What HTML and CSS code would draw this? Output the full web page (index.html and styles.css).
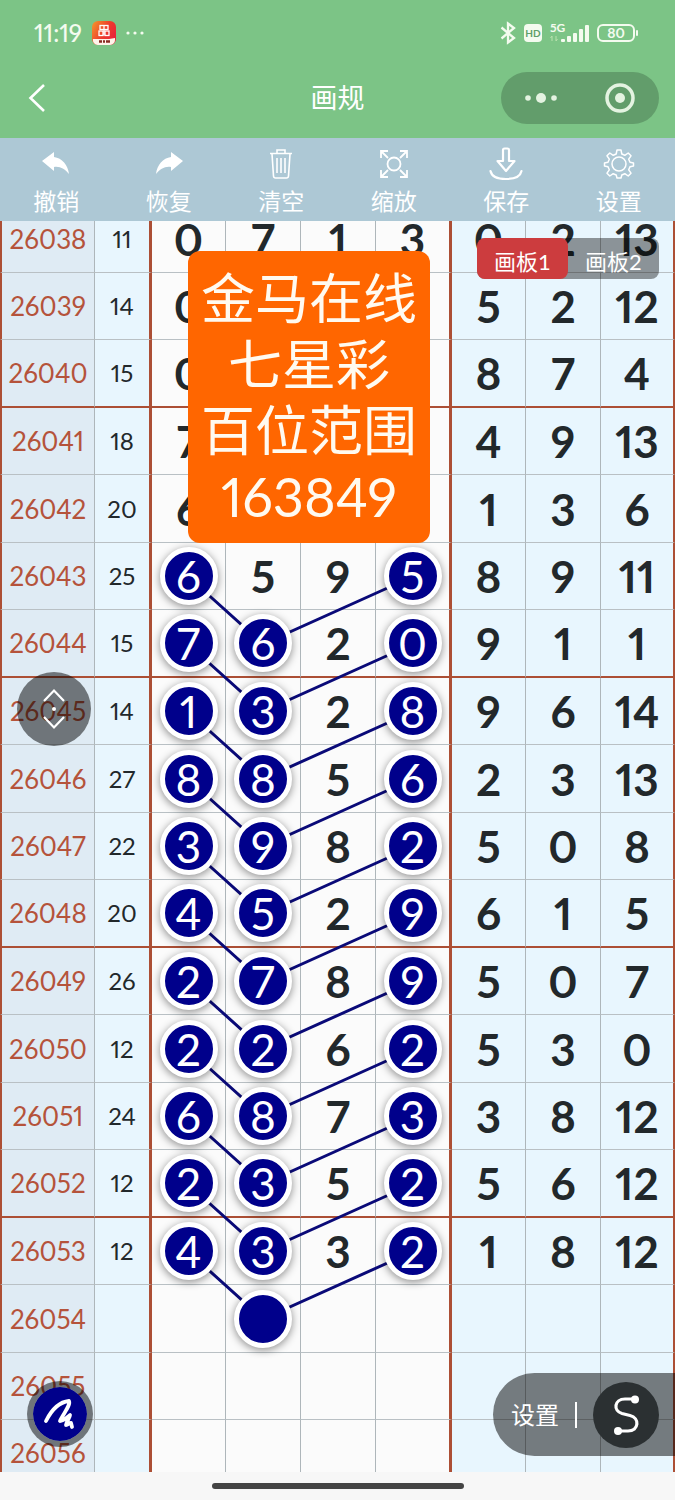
FILE: index.html
```html
<!DOCTYPE html>
<html lang="zh-CN">
<head>
    <meta charset="UTF-8">
    <meta name="viewport" content="width=device-width, initial-scale=1.0">
    <title>画规</title>
    <link rel="stylesheet" href="styles.css">
</head>
<body>
    <header class="header">
        <div class="status-bar">
            <div class="status-left">
                <span class="time">11:19</span>
                <svg class="app-icon" width="24" height="24" viewBox="0 0 24 24">
                    <defs>
                        <linearGradient id="appBg" x1="0" y1="0" x2="1" y2="0.6">
                            <stop offset="0" stop-color="#f59a2c"/>
                            <stop offset="0.6" stop-color="#ee3b2c"/>
                            <stop offset="1" stop-color="#e8243a"/>
                        </linearGradient>
                    </defs>
                    <rect width="24" height="24" rx="6" fill="url(#appBg)"/>
                    <path d="M1 18h16l6-1v2a5 5 0 0 1-5 5H6a5 5 0 0 1-5-6z" fill="#fff4ea"/>
                    <g fill="none" stroke="#fff" stroke-width="1.3">
                        <rect x="8" y="4.500" width="8" height="4"/>
                        <path d="M12 4.500v4M12 8.500v6"/>
                        <rect x="7" y="10" width="4" height="4.500"/>
                        <rect x="13" y="10" width="4" height="4.500"/>
                    </g>
                    <path d="M7 20.500h3M11 20.500h2M14 20.500h4" stroke="#8a2b22" stroke-width="2.500"/>
                </svg>
                <svg width="18" height="6" viewBox="0 0 18 6" fill="#f4fbef">
                    <circle cx="2" cy="3" r="1.600"/><circle cx="9" cy="3" r="1.600"/><circle cx="16" cy="3" r="1.600"/>
                </svg>
            </div>
            <div class="status-right">
                <svg width="16" height="24" viewBox="0 0 16 24" fill="none" stroke="#f4fbef" stroke-width="2.300">
                    <path d="M1.500 6.500L14 17L8 21.500V2.500L14 7L1.500 17.500"/>
                </svg>
                <span class="hd">HD</span>
                <span class="signal">
                    <span class="net">5G</span>
                    <svg width="39" height="20" viewBox="0 0 39 20" fill="#f4fbef">
                        <path d="M2 13v5M0.500 15L2 13M6 13v5M7.500 16L6 18" stroke="#b9e2ae" fill="none"/>
                        <rect x="11" y="16" width="4" height="3" rx="1"/>
                        <rect x="17" y="13" width="4" height="6" rx="1"/>
                        <rect x="23" y="10" width="4" height="9" rx="1"/>
                        <rect x="29" y="6" width="4" height="13" rx="1"/>
                        <rect x="35" y="2" width="4" height="17" rx="1"/>
                    </svg>
                </span>
                <span class="battery">80</span>
            </div>
        </div>
        <nav class="nav">
            <button class="back" aria-label="返回">
                <svg width="18" height="30" viewBox="0 0 18 30" fill="none" stroke="#fff" stroke-width="2.600">
                    <path d="M16 2L2.500 15L16 28"/>
                </svg>
            </button>
            <h1 class="title">画规</h1>
            <div class="capsule">
                <button aria-label="更多">
                    <svg width="32" height="12" viewBox="0 0 32 12" fill="#e4f3e1">
                        <circle cx="3" cy="6" r="2.800"/><circle cx="16" cy="6" r="5"/><circle cx="29" cy="6" r="2.800"/>
                    </svg>
                </button>
                <button aria-label="关闭">
                    <svg width="32" height="32" viewBox="0 0 32 32">
                        <circle cx="16" cy="16" r="13" fill="none" stroke="#e4f3e1" stroke-width="3.500"/>
                        <circle cx="16" cy="16" r="5" fill="#e4f3e1"/>
                    </svg>
                </button>
            </div>
        </nav>
    </header>

    <div class="toolbar">
        <button class="tool">
            <svg width="34" height="34" viewBox="0 0 34 34" fill="#fff">
                <path d="M3 14L15 5v5c8 1 14 8 15 17c-4-5-9-8-15-7v4z"/>
            </svg>
            <span>撤销</span>
        </button>
        <button class="tool">
            <svg width="34" height="34" viewBox="0 0 34 34" fill="#fff">
                <path d="M31 14L19 5v5C11 11 5 18 4 27c4-5 9-8 15-7v4z"/>
            </svg>
            <span>恢复</span>
        </button>
        <button class="tool">
            <svg width="34" height="34" viewBox="0 0 34 34" fill="none" stroke="#fff" stroke-width="1.600">
                <path d="M6 6.500h22M13 6V3h8v3M8 7l1.500 22q.2 2 2 2h11q1.800 0 2-2L26 7M13 11v15M17 11v15M21 11v15"/>
            </svg>
            <span>清空</span>
        </button>
        <button class="tool">
            <svg width="34" height="34" viewBox="0 0 34 34" fill="none" stroke="#fff" stroke-width="1.800">
                <circle cx="17" cy="17" r="6.500"/>
                <path d="M11 4H4v7M4 4l7 7M23 4h7v7M30 4l-7 7M11 30H4v-7M4 30l7-7M23 30h7v-7M30 30l-7-7"/>
            </svg>
            <span>缩放</span>
        </button>
        <button class="tool">
            <svg width="34" height="34" viewBox="0 0 34 34" fill="none" stroke="#fff" stroke-width="2.200" stroke-linejoin="round" stroke-linecap="round">
                <path d="M14 3q0-1.500 1.500-1.500h3q1.500 0 1.500 1.500v11h5.500L17 24L8.500 14H14zM1.500 24c1 5 6 8 15.500 8s14.500-3 15.500-8"/>
            </svg>
            <span>保存</span>
        </button>
        <button class="tool">
            <svg width="34" height="34" viewBox="0 0 34 34" fill="none" stroke="#fff" stroke-width="1.500" stroke-linejoin="round">
                <circle cx="17" cy="17" r="7"/>
                <path d="M15 3h4l.8 4 3 1.300 3.400-2.300 2.800 2.800-2.300 3.400 1.300 3 3.500.8v3l-3.500.8-1.300 3 2.300 3.400-2.800 2.800-3.400-2.300-3 1.300-.8 3h-4l-.8-3-3-1.300-3.400 2.300-2.800-2.800 2.300-3.400-1.300-3-3.500-.8v-3l3.500-.8 1.300-3-2.300-3.400 2.800-2.800 3.400 2.300 3-1.300z"/>
            </svg>
            <span>设置</span>
        </button>
    </div>

    <main class="board">
        <div class="sheet">
            <table class="chart">
                <colgroup>
                    <col class="c-issue"><col class="c-sum">
                    <col class="c-first"><col class="c-num"><col class="c-num"><col class="c-last">
                    <col class="c-first"><col class="c-num"><col class="c-first">
                </colgroup>
                <tbody id="rows"></tbody>
            </table>
            <svg class="lines" id="lines" viewBox="0 0 675 1283" preserveAspectRatio="none"></svg>
        </div>

        <div class="note">金马在线<br>七星彩<br>百位范围<br>163849</div>

        <div class="tabs">
            <button class="tab active">画板1</button>
            <button class="tab">画板2</button>
        </div>

        <button class="scroll-btn" aria-label="滚动">
            <svg width="24" height="42" viewBox="0 0 24 42" fill="none" stroke="#fff" stroke-width="2.200">
                <path d="M2 13L12 2.500L22 13M2 29L12 39.500L22 29"/>
                <circle cx="12" cy="21" r="2" fill="#fff" stroke="none"/>
            </svg>
        </button>

        <button class="pen-btn" aria-label="画笔">
            <svg width="36" height="36" viewBox="0 0 36 36" fill="none" stroke="#fff" stroke-width="3.800" stroke-linecap="round" stroke-linejoin="round">
                <path d="M4 25C9 15 17 6 27 5C29 9 21 18 18 25C22 25 25 21 28 19C28 22 24 26 24 29C26 29 27 27 29 27L30 31"/>
            </svg>
        </button>

        <div class="panel">
            <button class="panel-text">设置</button>
            <span class="divider"></span>
            <button class="curve-btn" aria-label="曲线">
                <svg width="32" height="42" viewBox="0 0 32 42">
                    <path d="M25 5H15C4 5 3 17 12 19.500L20 21.500C30 24 29 37 18 37H8" fill="none" stroke="#fff" stroke-width="3.200"/>
                    <circle cx="25" cy="5.500" r="4" fill="#fff"/>
                    <circle cx="8" cy="37" r="4" fill="#fff"/>
                </svg>
            </button>
        </div>
    </main>

    <footer class="home"><span class="home-bar"></span></footer>

    <script src="app.js"></script>
</body>
</html>
```

FILE: styles.css
```css
* {
    box-sizing: border-box;
}
body {
    margin: 0;
    height: 100vh;
    display: flex;
    flex-direction: column;
    background: #f7f7f7;
    font-family: Lato, 'Noto Sans CJK SC', sans-serif;
    font-variant-numeric: proportional-nums;
    color: #22282b;
}
button {
    border: 0;
    padding: 0;
    background: none;
    color: #fff;
    font-family: inherit;
    display: flex;
    align-items: center;
    justify-content: center;
    cursor: pointer;
}
svg {
    display: block;
}

/* 顶部 */
.header {
    background: #7cc486;
    color: #f4fbef;
}
.status-bar {
    height: 66px;
    padding: 0 40px 0 34px;
    display: flex;
    align-items: center;
    justify-content: space-between;
}
.status-left,
.status-right {
    display: flex;
    align-items: center;
    gap: 10px;
}
.status-right {
    gap: 8px;
}
.time {
    font-size: 24px;
    line-height: 24px;
    font-weight: 500;
}
.hd {
    width: 18px;
    height: 18px;
    border-radius: 4px;
    background: #f4fbef;
    color: #5f9f69;
    font-size: 10px;
    line-height: 18px;
    font-weight: 700;
    text-align: center;
}
.signal {
    position: relative;
}
.net {
    position: absolute;
    left: 0;
    top: -1px;
    font-size: 12px;
    line-height: 12px;
    font-weight: 700;
}
.battery {
    position: relative;
    width: 38px;
    height: 18px;
    border: 2px solid #f4fbef;
    border-radius: 6px;
    font-size: 14px;
    line-height: 14px;
    font-weight: 700;
    text-align: center;
}
.battery::after {
    content: '';
    position: absolute;
    right: -5px;
    top: 4px;
    width: 2px;
    height: 6px;
    border-radius: 1px;
    background: #f4fbef;
}
.nav {
    height: 72px;
    padding: 0 16px 8px 28px;
    display: grid;
    grid-template-columns: 1fr auto 1fr;
    align-items: center;
}
.back {
    width: 18px;
    height: 40px;
}
.title {
    margin: 0 12px 0 0;
    font-size: 27px;
    line-height: 40px;
    font-weight: 400;
    color: #fff;
}
.capsule {
    justify-self: end;
    width: 158px;
    height: 52px;
    border-radius: 26px;
    background: #629d6b;
    display: flex;
}
.capsule button {
    flex: 1;
}

/* 工具栏 */
.toolbar {
    height: 83px;
    padding-top: 5px;
    display: flex;
    flex-shrink: 0;
    background: #adc8d5;
}
.tool {
    flex: 1;
    flex-direction: column;
    gap: 4px;
    font-size: 23px;
    line-height: 32px;
}

/* 走势图 */
.board {
    flex: 1;
    min-height: 0;
    position: relative;
    overflow: hidden;
}
.sheet {
    position: relative;
    margin-top: -16px;
}
.chart {
    width: 100%;
    table-layout: fixed;
    border-collapse: separate;
    border-spacing: 0;
}
.c-issue { width: 95px; }
.c-sum { width: 57px; }
.c-first { width: 74px; }
.c-num { width: 75px; }
.c-last { width: 76px; }
.chart tr {
    height: 67px;
}
.chart tr:nth-child(odd) {
    height: 68px;
}
.chart td,
.chart th {
    padding: 0;
    border-right: 1px solid #aeb6ba;
    border-bottom: 1px solid #b9c0c4;
    text-align: center;
    vertical-align: middle;
    font-size: 44px;
    line-height: 54px;
    font-weight: 700;
    background: #e8f6fe;
}
.chart .issue {
    border-left: 2px solid #ac4f35;
    background: #dfebf4;
    color: #b5533b;
    font-size: 26px;
    font-weight: 400;
}
.chart .sum {
    font-size: 24px;
    font-weight: 400;
}
.chart .main {
    background: #fbfbfb;
}
.chart .edge {
    border-right: 3px solid #ac4f35;
}
.chart td:last-child {
    border-right: 2px solid #ac4f35;
}
.chart .split td,
.chart .split th {
    border-bottom: 2px solid #ac4f35;
}
.ball {
    position: relative;
    z-index: 2;
    display: block;
    width: 58px;
    height: 58px;
    margin: 0 auto;
    border: 5px solid #fff;
    border-radius: 50%;
    background: #00008b;
    box-shadow: 0 2px 8px rgba(0, 0, 0, 0.45);
    color: #fff;
    font-weight: 400;
    line-height: 48px;
}
.lines {
    position: absolute;
    left: 0;
    top: 0;
    z-index: 1;
    width: 100%;
    height: 100%;
}
.lines polyline {
    fill: none;
    stroke: #0a0a78;
    stroke-width: 3;
}

/* 浮层 */
.note {
    position: absolute;
    left: 188px;
    top: 30px;
    z-index: 3;
    padding: 15px 13px 13px;
    border-radius: 12px;
    background: #ff6600;
    color: #fffaf0;
    font-size: 54px;
    line-height: 66px;
    text-align: center;
}
.tabs {
    position: absolute;
    right: 16px;
    top: 17px;
    z-index: 3;
    display: flex;
    border-radius: 8px;
    background: rgba(0, 0, 0, 0.4);
}
.tab {
    width: 91px;
    height: 41px;
    border-radius: 8px;
    font-size: 22px;
    line-height: 32px;
    padding-top: 6px;
}
.tab.active {
    background: #cc3c3e;
}
.scroll-btn,
.pen-btn,
.panel {
    position: absolute;
    z-index: 3;
}
.scroll-btn {
    left: 17px;
    top: 451px;
    width: 74px;
    height: 74px;
    border-radius: 50%;
    background: rgba(0, 0, 0, 0.5);
}
.pen-btn {
    left: 27px;
    bottom: 25px;
    width: 66px;
    height: 66px;
    border: 6px solid rgba(0, 0, 0, 0.5);
    border-radius: 50%;
    background: #00008b;
    background-clip: padding-box;
}
.panel {
    right: 0;
    bottom: 16px;
    height: 83px;
    padding: 0 16px 0 18px;
    border-radius: 42px 0 0 42px;
    background: rgba(0, 0, 0, 0.5);
    display: flex;
    align-items: center;
    gap: 16px;
}
.panel-text {
    font-size: 24px;
    line-height: 36px;
}
.divider {
    width: 2px;
    height: 26px;
    background: #fff;
}
.curve-btn {
    width: 66px;
    height: 66px;
    border-radius: 50%;
    background: #2b3032;
}

.home {
    height: 28px;
    flex-shrink: 0;
    display: flex;
    align-items: center;
    justify-content: center;
}
.home-bar {
    width: 252px;
    height: 6px;
    border-radius: 3px;
    background: #444;
}
```

FILE: app.js
```js
// 期号, 和值, 四个号码, 右侧三列
const data = [
    ['26038', 11, 0, 7, 1, 3, 0, 2, 13],
    ['26039', 14, 0, '', '', '', 5, 2, 12],
    ['26040', 15, 0, '', '', '', 8, 7, 4],
    ['26041', 18, 7, '', '', '', 4, 9, 13],
    ['26042', 20, 6, '', '', '', 1, 3, 6],
    ['26043', 25, 6, 5, 9, 5, 8, 9, 11],
    ['26044', 15, 7, 6, 2, 0, 9, 1, 1],
    ['26045', 14, 1, 3, 2, 8, 9, 6, 14],
    ['26046', 27, 8, 8, 5, 6, 2, 3, 13],
    ['26047', 22, 3, 9, 8, 2, 5, 0, 8],
    ['26048', 20, 4, 5, 2, 9, 6, 1, 5],
    ['26049', 26, 2, 7, 8, 9, 5, 0, 7],
    ['26050', 12, 2, 2, 6, 2, 5, 3, 0],
    ['26051', 24, 6, 8, 7, 3, 3, 8, 12],
    ['26052', 12, 2, 3, 5, 2, 5, 6, 12],
    ['26053', 12, 4, 3, 3, 2, 1, 8, 12],
    ['26054', '', '', '', '', '', '', '', ''],
    ['26055', '', '', '', '', '', '', '', ''],
    ['26056', '', '', '', '', '', '', '', '']
];

const first = 5;
const last = 15;

function hasBall(row, col) {
    if (col === 2 || col === 5) return row >= first && row <= last;
    if (col === 3) return row > first && row <= last + 1;
    return false;
}

function cell(value, row, col) {
    if (col === 0) return `<th class="issue" scope="row">${value}</th>`;
    const cls = [];
    if (col === 1) cls.push('sum');
    if (col >= 2 && col <= 5) cls.push('main');
    if (col === 1 || col === 5) cls.push('edge');
    const text = hasBall(row, col) ? `<span class="ball">${value}</span>` : value;
    return `<td class="${cls.join(' ')}">${text}</td>`;
}

document.getElementById('rows').innerHTML = data.map((items, row) => {
    const split = row % 4 === 2 ? ' class="split"' : '';
    return `<tr${split}>${items.map((v, col) => cell(v, row, col)).join('')}</tr>`;
}).join('');

// 连线
const rowY = row => row * 67.5 + 34;
let lines = '';
for (let row = first; row <= last; row++) {
    lines += `<polyline points="188,${rowY(row)} 263,${rowY(row + 1)} 413,${rowY(row)}"/>`;
}
document.getElementById('lines').innerHTML = lines;
```
